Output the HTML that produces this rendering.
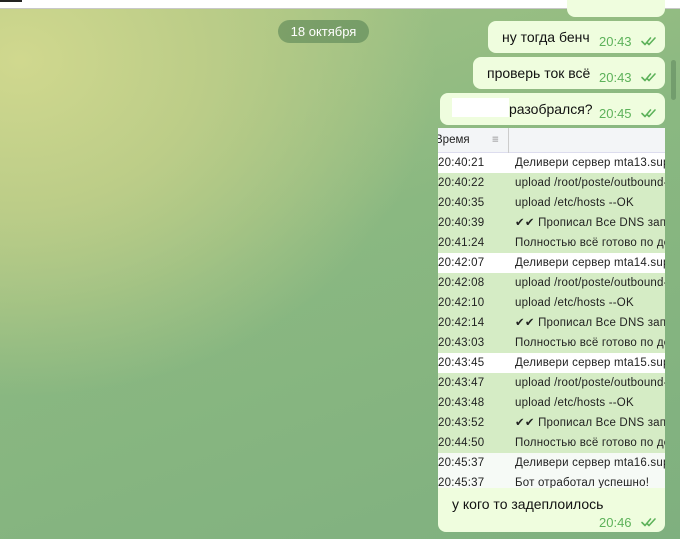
<!DOCTYPE html><html><head><meta charset="utf-8"><style>
*{margin:0;padding:0;box-sizing:border-box}
body{width:680px;height:539px;overflow:hidden;position:relative;font-family:"Liberation Sans","DejaVu Sans",sans-serif;
background:radial-gradient(ellipse 520px 420px at 20px 60px,#d0d88e 0%,#bccd88 35%,rgba(140,185,128,0) 80%),linear-gradient(160deg,#a8c585 0%,#8ab881 45%,#7fb07f 100%);}
.top{position:absolute;left:0;top:0;width:680px;height:9px;background:#fff;border-bottom:1px solid #c8c8c8}
.blk{position:absolute;left:0;top:0;width:22px;height:2px;background:#222}
.pill{position:absolute;left:278px;top:20px;width:91px;height:23px;border-radius:12px;background:rgba(80,125,80,.55);color:#fff;font-size:13px;text-align:center;line-height:23px}
.b{position:absolute;background:#effdde;border-radius:8px;font-size:14px;color:#111}
.t{position:absolute;color:#5db25a;font-size:13px}
.ck{position:absolute;width:18px;height:10px}
.tbl{position:absolute;left:438px;top:128px;width:227px;height:362px;overflow:hidden;font-family:"Liberation Sans",sans-serif;font-size:11.5px;color:#222;background:#effdde}
.hd{height:25px;background:#f3f5f7;border-bottom:1px solid #dde;position:relative;line-height:25px}
.r{height:20px;line-height:20px;background:#d5ecc5;white-space:nowrap;position:relative;letter-spacing:0.2px}
.w{background:#fff}
.r span{position:absolute;left:77px}
</style></head><body>
<svg width="0" height="0" style="position:absolute"><defs><g id="c"><path d="M1 5.5l3 3L9.5 2M6.5 7l1.5 1.5L14 2" fill="none" stroke="#5db25a" stroke-width="1.6" stroke-linecap="round" stroke-linejoin="round"/></g></defs></svg>
<div class="top"></div><div class="blk"></div>
<div class="pill">18 октября</div>
<div class="b" style="left:567px;top:-8px;width:98px;height:25px"></div>
<div class="b" style="left:488px;top:21px;width:177px;height:32px"><span style="position:absolute;left:14px;top:8px">ну тогда бенч</span><span class="t" style="left:111px;top:13px">20:43</span><svg class="ck" style="left:152px;top:15px" viewBox="0 0 16 10"><use href="#c"/></svg></div>
<div class="b" style="left:473px;top:57px;width:192px;height:32px"><span style="position:absolute;left:14px;top:8px">проверь ток всё</span><span class="t" style="left:126px;top:13px">20:43</span><svg class="ck" style="left:167px;top:15px" viewBox="0 0 16 10"><use href="#c"/></svg></div>
<div class="b" style="left:440px;top:93px;width:225px;height:32px"><div style="position:absolute;left:12px;top:5px;width:57px;height:19px;background:#fff"></div><span style="position:absolute;left:69px;top:8px">разобрался?</span><span class="t" style="left:159px;top:13px">20:45</span><svg class="ck" style="left:200px;top:15px" viewBox="0 0 16 10"><use href="#c"/></svg></div>
<div class="tbl">
<div class="hd" style="margin-left:-3px">Время<span style="position:absolute;left:57px;color:#888">≡</span><div style="position:absolute;left:73px;top:0;width:1px;height:25px;background:#ccc"></div></div>
<div class="r w">20:40:21<span>Деливери сервер mta13.support</span></div>
<div class="r">20:40:22<span>upload /root/poste/outbound-hosts</span></div>
<div class="r">20:40:35<span>upload /etc/hosts --OK</span></div>
<div class="r">20:40:39<span>✔✔ Прописал Все DNS записи</span></div>
<div class="r">20:41:24<span>Полностью всё готово по домену</span></div>
<div class="r w">20:42:07<span>Деливери сервер mta14.support</span></div>
<div class="r">20:42:08<span>upload /root/poste/outbound-hosts</span></div>
<div class="r">20:42:10<span>upload /etc/hosts --OK</span></div>
<div class="r">20:42:14<span>✔✔ Прописал Все DNS записи</span></div>
<div class="r">20:43:03<span>Полностью всё готово по домену</span></div>
<div class="r w">20:43:45<span>Деливери сервер mta15.support</span></div>
<div class="r">20:43:47<span>upload /root/poste/outbound-hosts</span></div>
<div class="r">20:43:48<span>upload /etc/hosts --OK</span></div>
<div class="r">20:43:52<span>✔✔ Прописал Все DNS записи</span></div>
<div class="r">20:44:50<span>Полностью всё готово по домену</span></div>
<div class="r w" style="background:#f6faf6">20:45:37<span>Деливери сервер mta16.support</span></div>
<div class="r w" style="background:#f6faf6">20:45:37<span>Бот отработал успешно!</span></div>
</div>
<div class="b" style="left:438px;top:488px;width:227px;height:44px;border-radius:0 0 8px 8px"><span style="position:absolute;left:14px;top:8px">у кого то задеплоилось</span><span class="t" style="left:161px;top:27px">20:46</span><svg class="ck" style="left:202px;top:29px" viewBox="0 0 16 10"><use href="#c"/></svg></div>
<div style="position:absolute;left:671px;top:60px;width:5px;height:40px;border-radius:3px;background:rgba(90,130,90,.5)"></div>
</body></html>
